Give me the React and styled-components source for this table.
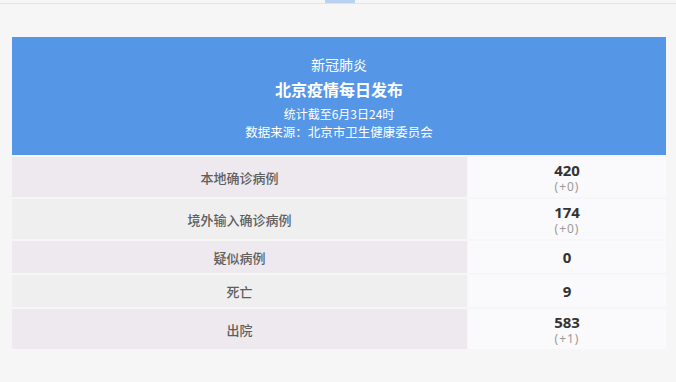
import React from "react";
import styled, { createGlobalStyle } from "styled-components";

const Global = createGlobalStyle`
  html, body { margin: 0; padding: 0; background: #f6f6f6; }
  body { font-family: "Noto Sans", "Noto Sans CJK SC", sans-serif; }
`;

const Page = styled.div`
  width: 676px;
  height: 382px;
  background: #f6f6f6;
  display: flex;
  flex-direction: column;
  overflow: hidden;
`;

const TopBar = styled.div`
  height: 3px;
  border-bottom: 1px solid #dde4ee;
  display: flex;
  justify-content: flex-start;
  padding-left: 325px;
`;

const TopTab = styled.div`
  width: 30px;
  height: 3px;
  background: #b8d2f2;
`;

const Card = styled.div`
  margin: 33px 10px 0 12px;
  display: flex;
  flex-direction: column;
  gap: 2px;
`;

const Header = styled.div`
  background: #5597e6;
  height: 118px;
  box-sizing: border-box;
  padding-top: 17px;
  display: flex;
  flex-direction: column;
  align-items: center;
  color: #fff;
  font-family: "Noto Sans CJK SC", sans-serif;
`;

const Line = styled.div`
  font-size: ${(p) => p.$size}px;
  line-height: ${(p) => p.$lh}px;
  font-weight: ${(p) => (p.$bold ? 700 : 400)};
  margin-top: ${(p) => p.$mt || 0}px;
  color: #fff;
`;

const Table = styled.div`
  display: flex;
  flex-direction: column;
  gap: 2px;
`;

const Row = styled.div`
  display: grid;
  grid-template-columns: 455px 1fr;
  column-gap: 1px;
  height: ${(p) => (p.$tall ? 40 : 32)}px;
`;

const Label = styled.div`
  background: ${(p) => (p.$alt ? "#efefef" : "#ede9ee")};
  display: flex;
  align-items: center;
  justify-content: center;
  font-family: "Noto Sans CJK SC", sans-serif;
  font-size: 13px;
  font-weight: 500;
  color: #5e5e5e;
`;

const Value = styled.div`
  background: #faf9fb;
  display: flex;
  flex-direction: column;
  align-items: center;
  justify-content: center;
`;

const Num = styled.div`
  font-family: "Noto Sans", sans-serif;
  font-size: 15px;
  line-height: 18px;
  font-weight: 700;
  color: #333;
`;

const Diff = styled.div`
  font-family: "Noto Sans", sans-serif;
  font-size: 12px;
  line-height: 15px;
  color: #9a9a9a;
  letter-spacing: 1px;
`;

const rows = [
  { label: "本地确诊病例", num: "420", diff: "(+0)" },
  { label: "境外输入确诊病例", num: "174", diff: "(+0)" },
  { label: "疑似病例", num: "0" },
  { label: "死亡", num: "9" },
  { label: "出院", num: "583", diff: "(+1)" },
];

export default function App() {
  return (
    <Page>
      <Global />
      <TopBar>
        <TopTab />
      </TopBar>
      <Card>
        <Header>
          <Line $size={14} $lh={20}>新冠肺炎</Line>
          <Line $size={16} $lh={22} $mt={4} $bold>北京疫情每日发布</Line>
          <Line $size={12} $lh={18} $mt={5}>统计截至6月3日24时</Line>
          <Line $size={12.5} $lh={18}>数据来源：北京市卫生健康委员会</Line>
        </Header>
        <Table>
          {rows.map((r, i) => (
            <Row key={r.label} $tall={!!r.diff}>
              <Label $alt={i % 2 === 1}>{r.label}</Label>
              <Value>
                <Num>{r.num}</Num>
                {r.diff && <Diff>{r.diff}</Diff>}
              </Value>
            </Row>
          ))}
        </Table>
      </Card>
    </Page>
  );
}
